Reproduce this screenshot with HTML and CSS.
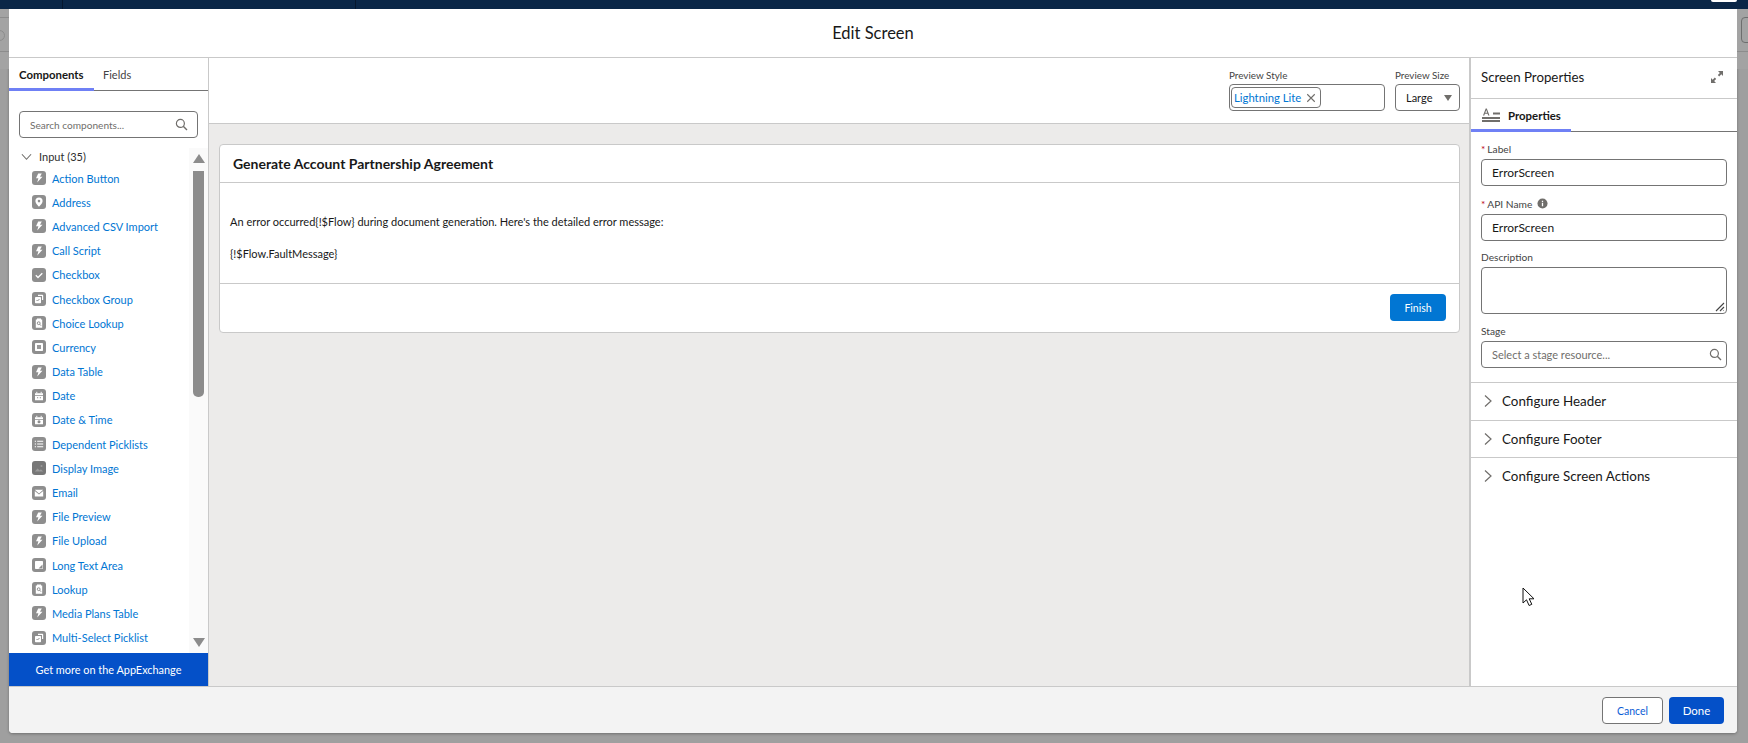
FILE: index.html
```html
<!DOCTYPE html>
<html lang="en">
<head>
<meta charset="utf-8">
<title>Edit Screen</title>
<link rel="stylesheet" href="styles.css">
</head>
<body>
<svg class="defs" width="0" height="0" aria-hidden="true">
  <symbol id="i-bolt" viewBox="0 0 14 14"><rect width="14" height="14" rx="3" fill="#8e8e8e"/><path d="M6.2 2.6h3.6L8 5.8h2.5L5.2 11.6l1.2-4.4H4z" fill="#fff"/></symbol>
  <symbol id="i-pin" viewBox="0 0 14 14"><rect width="14" height="14" rx="3" fill="#8e8e8e"/><path d="M7 2.5a3.6 3.6 0 0 0-3.6 3.6C3.400 8.600 7 11.800 7 11.800s3.600-3.200 3.600-5.700A3.600 3.600 0 0 0 7 2.500zm0 4.900a1.300 1.300 0 1 1 0-2.600 1.300 1.300 0 0 1 0 2.600z" fill="#fff"/></symbol>
  <symbol id="i-check" viewBox="0 0 14 14"><rect width="14" height="14" rx="3" fill="#8e8e8e"/><path d="M3.800 7.300l2.200 2.200 4.300-4.300" fill="none" stroke="#fff" stroke-width="1.300"/></symbol>
  <symbol id="i-group" viewBox="0 0 14 14"><rect width="14" height="14" rx="3" fill="#8e8e8e"/><path d="M6 2.800h4.400a.8.800 0 0 1 .8.800V8H10V4H6z" fill="#fff"/><rect x="3" y="5" width="6" height="6.200" rx=".8" fill="#fff"/><path d="M4.500 8l1 1 2-2" fill="none" stroke="#8e8e8e"/></symbol>
  <symbol id="i-lookup" viewBox="0 0 14 14"><rect width="14" height="14" rx="3" fill="#8e8e8e"/><path d="M5 2.500h4v1h1.200v8.300H3.800V3.500H5z" fill="#fff"/><circle cx="6.700" cy="7.200" r="1.400" fill="none" stroke="#8e8e8e"/><path d="M7.700 8.200l1.300 1.500" stroke="#8e8e8e"/></symbol>
  <symbol id="i-currency" viewBox="0 0 14 14"><rect width="14" height="14" rx="3" fill="#8e8e8e"/><rect x="3" y="3" width="8" height="8" rx=".8" fill="#fff"/><rect x="5" y="5" width="4" height="4" fill="#9a9a9a"/></symbol>
  <symbol id="i-date" viewBox="0 0 14 14"><rect width="14" height="14" rx="3" fill="#8e8e8e"/><path d="M3 4.300h8v2H3zM3 7.100h8v4.100H3z" fill="#fff"/><path d="M4.800 2.800v1.500M9.200 2.800v1.500" stroke="#fff"/><path d="M5 8.200h1.200v1H5zM7.800 8.200H9v1H7.800z" fill="#8e8e8e"/></symbol>
  <symbol id="i-datetime" viewBox="0 0 14 14"><rect width="14" height="14" rx="3" fill="#8e8e8e"/><path d="M3 4.300h8v2H3zM3 7H11v4.200H3z" fill="#fff"/><path d="M4.800 2.800v1.500M9.200 2.800v1.500" stroke="#fff"/><circle cx="7" cy="8.800" r="1.500" fill="#8e8e8e"/></symbol>
  <symbol id="i-list" viewBox="0 0 14 14"><rect width="14" height="14" rx="3" fill="#8e8e8e"/><path d="M5.200 4.300h6M5.200 7h6M5.200 9.700h6" stroke="#fff" stroke-width="1.100"/><path d="M2.800 4.300h1.200M2.800 7h1.200M2.800 9.700h1.200" stroke="#fff" stroke-width="1.100"/></symbol>
  <symbol id="i-image" viewBox="0 0 14 14"><rect width="14" height="14" rx="3" fill="#777"/><path d="M2.800 10.500l2.800-3 2 2 1.300-1.300 2.300 2.300z" fill="#9a9a9a"/><circle cx="9.500" cy="5" r="1" fill="#9a9a9a"/></symbol>
  <symbol id="i-mail" viewBox="0 0 14 14"><rect width="14" height="14" rx="3" fill="#8e8e8e"/><path d="M2.800 3.800h8.400L7 7.400z" fill="#fff"/><path d="M2.800 5l4.200 3.500L11.200 5v5.400H2.800z" fill="#fff"/></symbol>
  <symbol id="i-text" viewBox="0 0 14 14"><rect width="14" height="14" rx="3" fill="#8e8e8e"/><rect x="3" y="3" width="8" height="8" rx=".8" fill="#fff"/><path d="M10.500 6.500v4h-4z" fill="#8e8e8e"/></symbol>
  <symbol id="i-search" viewBox="0 0 14 14"><circle cx="5.800" cy="5.800" r="4.300" fill="none" stroke="currentColor" stroke-width="1.300"/><path d="M8.900 8.900l4 4" stroke="currentColor" stroke-width="1.500"/></symbol>
  <symbol id="i-right" viewBox="0 0 10 14"><path d="M2 1.500l6 5.500-6 5.500" fill="none" stroke="#706e6b" stroke-width="1.200"/></symbol>
</svg>

<div class="topnav"><span class="nav-sep nav-sep-a"></span><span class="nav-sep nav-sep-b"></span><span class="nav-tab"></span></div>
<div class="stage">
  <div class="gutter gutter-left"><span class="g-line"></span><span class="g-line g-line-b"></span><span class="g-ring"></span></div>
  <main class="modal">
    <header class="modal-head"><h1 class="modal-title">Edit Screen</h1></header>
    <div class="modal-body">
      <aside class="palette">
        <nav class="tabs">
          <span class="tab tab-active tab-components">Components</span>
          <span class="tab tab-plain">Fields</span>
        </nav>
        <div class="palette-search">
          <div class="field search-field"><span class="placeholder placeholder-sm">Search components...</span><svg class="search-ico"><use href="#i-search"/></svg></div>
        </div>
        <div class="palette-scroll">
          <div class="palette-list">
            <div class="section-row"><svg class="chev-down" viewBox="0 0 12 8"><path d="M1 1l5 5.500L11 1" fill="none" stroke="#706e6b" stroke-width="1.200"/></svg><span>Input (35)</span></div>
            <a class="item"><svg class="ico"><use href="#i-bolt"/></svg>Action Button</a>
            <a class="item"><svg class="ico"><use href="#i-pin"/></svg>Address</a>
            <a class="item"><svg class="ico"><use href="#i-bolt"/></svg>Advanced CSV Import</a>
            <a class="item"><svg class="ico"><use href="#i-bolt"/></svg>Call Script</a>
            <a class="item"><svg class="ico"><use href="#i-check"/></svg>Checkbox</a>
            <a class="item"><svg class="ico"><use href="#i-group"/></svg>Checkbox Group</a>
            <a class="item"><svg class="ico"><use href="#i-lookup"/></svg>Choice Lookup</a>
            <a class="item"><svg class="ico"><use href="#i-currency"/></svg>Currency</a>
            <a class="item"><svg class="ico"><use href="#i-bolt"/></svg>Data Table</a>
            <a class="item"><svg class="ico"><use href="#i-date"/></svg>Date</a>
            <a class="item"><svg class="ico"><use href="#i-datetime"/></svg>Date &amp; Time</a>
            <a class="item"><svg class="ico"><use href="#i-list"/></svg>Dependent Picklists</a>
            <a class="item"><svg class="ico"><use href="#i-image"/></svg>Display Image</a>
            <a class="item"><svg class="ico"><use href="#i-mail"/></svg>Email</a>
            <a class="item"><svg class="ico"><use href="#i-bolt"/></svg>File Preview</a>
            <a class="item"><svg class="ico"><use href="#i-bolt"/></svg>File Upload</a>
            <a class="item"><svg class="ico"><use href="#i-text"/></svg>Long Text Area</a>
            <a class="item"><svg class="ico"><use href="#i-lookup"/></svg>Lookup</a>
            <a class="item"><svg class="ico"><use href="#i-bolt"/></svg>Media Plans Table</a>
            <a class="item"><svg class="ico"><use href="#i-group"/></svg>Multi-Select Picklist</a>
          </div>
          <div class="scrollbar">
            <span class="sb-up"></span>
            <span class="sb-thumb"></span>
            <span class="sb-down"></span>
          </div>
        </div>
        <div class="appex">Get more on the AppExchange</div>
      </aside>

      <section class="canvas">
        <div class="toolbar">
          <div class="tool tool-style">
            <span class="tool-label">Preview Style</span>
            <div class="field style-field"><span class="pill"><span class="pill-text">Lightning Lite</span><svg class="pill-x" viewBox="0 0 12 12"><path d="M1.500 1.500l9 9M10.500 1.500l-9 9" stroke="#706e6b" stroke-width="1.300"/></svg></span></div>
          </div>
          <div class="tool tool-size">
            <span class="tool-label">Preview Size</span>
            <div class="field size-field"><span>Large</span><span class="caret"></span></div>
          </div>
        </div>
        <div class="canvas-area">
          <article class="card">
            <div class="card-head">Generate Account Partnership Agreement</div>
            <div class="card-body">
              <p>An error occurred{!$Flow} during document generation. Here's the detailed error message:</p>
              <p>{!$Flow.FaultMessage}</p>
            </div>
            <div class="card-foot"><button class="btn btn-finish">Finish</button></div>
          </article>
        </div>
      </section>

      <aside class="props">
        <div class="props-head"><span>Screen Properties</span>
          <svg class="expand" viewBox="0 0 12 12"><path d="M7 0h5v5l-1.700-1.700-2.100 2.100-1.400-1.400 2.100-2.100zM5 12H0V7l1.700 1.700 2.100-2.100 1.400 1.400-2.100 2.100z" fill="#706e6b"/></svg>
        </div>
        <nav class="tabs props-tabs">
          <span class="tab tab-active tab-props">
            <svg class="props-ico" viewBox="0 0 18 14"><path d="M0 9h18v2H0zM0 12h18v2H0zM11 4.500h7v2h-7z" fill="#706e6b"/><path d="M1 7.500L3.700.5h1.100l2.700 7H6.200l-.6-1.700H2.900l-.6 1.700zM3.300 4.800h1.900L4.250 2z" fill="#706e6b"/></svg>
            <span>Properties</span>
          </span>
        </nav>
        <div class="form">
          <label class="flabel flabel-first"><b class="req">*</b>Label</label>
          <div class="field form-field"><span>ErrorScreen</span></div>
          <label class="flabel flabel-api"><b class="req">*</b>API Name <svg class="info" viewBox="0 0 12 12"><circle cx="6" cy="6" r="5.500" fill="#706e6b"/><path d="M5.300 5.200h1.400v3.800H5.300zM5.300 2.900h1.400v1.400H5.300z" fill="#fff"/></svg></label>
          <div class="field form-field"><span>ErrorScreen</span></div>
          <label class="flabel flabel-desc">Description</label>
          <div class="field textarea-field"><svg class="grip" viewBox="0 0 10 10"><path d="M1 9l8-8M5 9l4-4M8.500 8.500h.5" stroke="#444" stroke-width="1.100"/></svg></div>
          <label class="flabel flabel-stage">Stage</label>
          <div class="field form-field stage-field"><span class="placeholder">Select a stage resource...</span><svg class="search-ico"><use href="#i-search"/></svg></div>
        </div>
        <div class="acc"><svg class="acc-ico"><use href="#i-right"/></svg>Configure Header</div>
        <div class="acc"><svg class="acc-ico"><use href="#i-right"/></svg>Configure Footer</div>
        <div class="acc"><svg class="acc-ico"><use href="#i-right"/></svg>Configure Screen Actions</div>
        <svg class="cursor" viewBox="0 0 13 20"><path d="M1 1v15l3.500-3.200 2.600 5.700 2.700-1.200-2.600-5.500h4.800z" fill="#fff" stroke="#111" stroke-width="1"/></svg>
      </aside>
    </div>
    <footer class="modal-foot">
      <button class="btn btn-cancel">Cancel</button>
      <button class="btn btn-done">Done</button>
    </footer>
  </main>
  <div class="gutter gutter-right"><span class="g-line"></span><span class="g-box"></span></div>
</div>
</body>
</html>
```
FILE: styles.css
```css
* { box-sizing: border-box; }
html, body { margin: 0; height: 100%; overflow: hidden; }
body {
  width: 1748px; height: 743px;
  background: #9f9f9f;
  color: #181818;
  font-family: "Lato", "Open Sans", sans-serif;
  font-size: 11px;
  display: flex; flex-direction: column;
}
.defs { position: absolute; }

.topnav { position: relative; height: 9px; background: #0a2647; flex: none; }
.nav-sep { position: absolute; top: 0; width: 1px; height: 9px; background: #06172d; }
.nav-sep-a { left: 62px; }
.nav-sep-b { left: 355px; }
.nav-tab { position: absolute; left: 1711px; top: 0; width: 26px; height: 2px; background: #fff; border-radius: 0 0 3px 3px; }

.stage { flex: none; height: 734px; display: flex; }
.gutter { position: relative; background: #a3a3a3; height: 60px; }
.gutter-left { width: 9px; flex: none; }
.gutter-right { width: 11px; flex: none; }
.g-line { position: absolute; left: 0; right: 0; top: 42px; height: 1px; background: #8c8c8c; }
.g-line-b { top: 8px; }
.g-ring { position: absolute; left: -6px; top: 21px; width: 11px; height: 11px; border: 1px solid #8c8c8c; border-radius: 50%; }
.g-box { position: absolute; left: 4px; top: 8px; width: 12px; height: 26px; border: 1px solid #6e6e6e; border-radius: 4px; }

.modal { width: 1728px; height: 724px; background: #fff; border-radius: 0 0 4px 4px; display: flex; flex-direction: column; overflow: hidden; box-shadow: 0 1px 3px rgba(0,0,0,.3); }
.modal-head { height: 49px; flex: none; border-bottom: 1px solid #c9c9c9; display: flex; align-items: center; justify-content: center; }
.modal-title { margin: 0; font-size: 16.500px; font-weight: 400; line-height: 20px; }
.modal-body { flex: 1; min-height: 0; display: flex; }

.palette { width: 200px; flex: none; border-right: 1px solid #c9c9c9; display: flex; flex-direction: column; }
.tabs { height: 33px; flex: none; border-bottom: 1px solid #747474; display: flex; align-items: stretch; }
.tab { display: flex; align-items: center; color: #444; font-size: 11px; position: relative; }
.tab-active { color: #181818; font-weight: 700; font-size: 11.400px; }
.tab-active::after { content: ""; position: absolute; left: 0; right: 0; bottom: -1px; height: 3px; background: #6f80f5; }
.tab-components { width: 85px; padding-left: 10px; }
.tab-plain { padding-left: 9px; }

.palette-search { padding: 20px 10px 0; flex: none; }
.field { border: 1px solid #747474; border-radius: 4px; background: #fff; display: flex; align-items: center; }
.search-field { height: 27px; padding: 0 9px 0 10px; justify-content: space-between; }
.placeholder { color: #706e6b; font-size: 11px; }
.placeholder-sm { font-size: 10.100px; }
.search-ico { width: 13px; height: 13px; color: #706e6b; flex: none; }

.palette-scroll { flex: 1; min-height: 0; margin-top: 10px; display: flex; }
.palette-list { flex: 1; min-width: 0; }
.section-row { height: 19px; display: flex; align-items: center; font-size: 11px; color: #2e2e2e; margin-top: -1px; }
.chev-down { width: 11px; height: 8px; margin: 0 7px 0 12px; flex: none; }
.item { height: 24.200px; display: flex; align-items: center; gap: 6px; padding-left: 23px; color: #0176d3; font-size: 11px; white-space: nowrap; }
.ico { width: 14px; height: 14px; flex: none; }

.scrollbar { width: 19px; flex: none; background: #fafafa; position: relative; display: flex; flex-direction: column; align-items: center; }
.sb-up { margin-top: 6px; width: 0; height: 0; border-left: 6px solid transparent; border-right: 6px solid transparent; border-bottom: 9px solid #8c8c8c; }
.sb-thumb { margin-top: 8px; width: 11px; height: 226px; background: #8c8c8c; border-radius: 0 0 5px 5px; }
.sb-down { margin-top: auto; margin-bottom: 6px; width: 0; height: 0; border-left: 6px solid transparent; border-right: 6px solid transparent; border-top: 9px solid #8c8c8c; }

.appex { height: 33px; flex: none; background: #0450c8; color: #fff; display: flex; align-items: center; justify-content: center; font-size: 10.900px; }

.canvas { flex: 1; min-width: 0; display: flex; flex-direction: column; }
.toolbar { height: 66px; flex: none; border-bottom: 1px solid #c9c9c9; display: flex; justify-content: flex-end; gap: 10px; padding: 9px 9px 0 0; }
.tool { display: flex; flex-direction: column; }
.tool-label { font-size: 9.900px; color: #444; height: 17px; line-height: 16px; white-space: nowrap; }
.tool-style { width: 156px; }
.tool-size { width: 65px; }
.style-field { height: 27px; padding-left: 1px; }
.pill { height: 21px; width: 90px; border: 1px solid #747474; border-radius: 4px; display: flex; align-items: center; justify-content: space-between; padding: 0 4px 0 2px; }
.pill-text { color: #0176d3; font-size: 11.300px; white-space: nowrap; }
.pill-x { width: 10px; height: 10px; flex: none; }
.size-field { height: 27px; padding: 0 7px 0 10px; justify-content: space-between; font-size: 11px; }
.caret { width: 0; height: 0; border-left: 4.500px solid transparent; border-right: 4.500px solid transparent; border-top: 6px solid #706e6b; }

.canvas-area { flex: 1; min-height: 0; background: #ecebea; padding: 20px 9px 0 10px; }
.card { height: 189px; background: #fff; border: 1px solid #c9c9c9; border-radius: 4px; display: flex; flex-direction: column; }
.card-head { height: 38px; flex: none; border-bottom: 1px solid #c9c9c9; padding-left: 13px; display: flex; align-items: center; font-size: 14px; font-weight: 700; }
.card-body { height: 101px; flex: none; border-bottom: 1px solid #c9c9c9; padding: 31px 10px 0; font-size: 11px; }
.card-body p { margin: 0 0 16px; line-height: 16px; }
.card-foot { flex: 1; display: flex; justify-content: flex-end; align-items: flex-start; padding: 10px 13px 0 0; }
.btn { font-family: inherit; font-size: 10.500px; border-radius: 4px; border: 1px solid transparent; padding: 0; height: 27px; }
.btn-finish { width: 56px; background: #0176d3; color: #fff; }

.props { width: 268px; flex: none; border-left: 2px solid #c9c9c9; display: flex; flex-direction: column; position: relative; }
.props-head { height: 41px; flex: none; border-bottom: 1px solid #c9c9c9; display: flex; justify-content: space-between; align-items: center; padding: 0 14px 3px 10px; font-size: 13.300px; }
.expand { width: 12px; height: 12px; }
.props-tabs { height: 33px; }
.tab-props { width: 100px; padding-left: 11px; gap: 8px; white-space: nowrap; }
.props-ico { width: 18px; height: 14px; flex: none; }

.form { padding: 0 10px; flex: none; height: 250px; }
.flabel { display: flex; align-items: center; height: 16px; padding-bottom: 1px; font-size: 10.200px; color: #444; margin-top: 10px; margin-bottom: 2px; }
.flabel-first { margin-top: 9px; }
.flabel-api { margin-top: 10px; }
.flabel-desc { margin-top: 8px; }
.flabel-stage { margin-top: 9px; }
.req { color: #ba0517; font-weight: 400; margin-right: 2px; }
.info { width: 11px; height: 11px; margin-left: 5px; }
.form-field { height: 27px; padding: 0 10px; font-size: 12px; justify-content: space-between; }
.textarea-field { height: 47px; position: relative; }
.grip { position: absolute; right: 1px; bottom: 1px; width: 10px; height: 10px; }
.stage-field { padding-right: 4px; }
.acc { height: 37.500px; flex: none; border-top: 1px solid #c9c9c9; display: flex; align-items: center; padding-left: 12px; gap: 9px; font-size: 13.400px; }
.acc-ico { width: 10px; height: 14px; flex: none; }
.cursor { position: absolute; left: 51px; top: 529px; width: 13px; height: 20px; }

.modal-foot { height: 47px; flex: none; background: #f3f3f3; border-top: 1px solid #c9c9c9; display: flex; justify-content: flex-end; align-items: flex-start; gap: 6px; padding: 10px 13px 0 0; }
.btn-cancel { width: 61px; background: #fff; border-color: #747474; color: #0b5cd5; }
.btn-done { width: 55px; background: #0450c8; color: #fff; font-size: 11.500px; }
```
